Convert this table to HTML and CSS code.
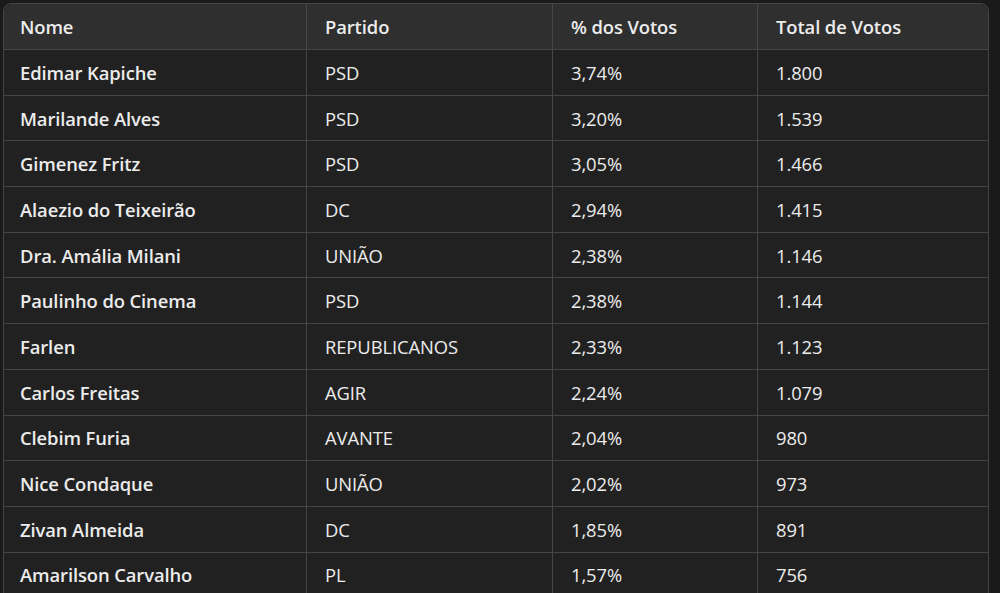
FILE: index.html
```html
<!DOCTYPE html>
<html lang="pt">
<head>
<meta charset="utf-8">
<link rel="stylesheet" href="styles.css">
</head>
<body>
<div class="wrap">
<table class="tbl">
<colgroup><col class="c1"><col class="c2"><col class="c3"><col class="c4"></colgroup>
<thead>
<tr><th>Nome</th><th>Partido</th><th>% dos Votos</th><th>Total de Votos</th></tr>
</thead>
<tbody>
<tr><td class="nm">Edimar Kapiche</td><td>PSD</td><td>3,74%</td><td>1.800</td></tr>
<tr><td class="nm">Marilande Alves</td><td>PSD</td><td>3,20%</td><td>1.539</td></tr>
<tr><td class="nm">Gimenez Fritz</td><td>PSD</td><td>3,05%</td><td>1.466</td></tr>
<tr><td class="nm">Alaezio do Teixeirão</td><td>DC</td><td>2,94%</td><td>1.415</td></tr>
<tr><td class="nm">Dra. Amália Milani</td><td>UNIÃO</td><td>2,38%</td><td>1.146</td></tr>
<tr><td class="nm">Paulinho do Cinema</td><td>PSD</td><td>2,38%</td><td>1.144</td></tr>
<tr><td class="nm">Farlen</td><td>REPUBLICANOS</td><td>2,33%</td><td>1.123</td></tr>
<tr><td class="nm">Carlos Freitas</td><td>AGIR</td><td>2,24%</td><td>1.079</td></tr>
<tr><td class="nm">Clebim Furia</td><td>AVANTE</td><td>2,04%</td><td>980</td></tr>
<tr><td class="nm">Nice Condaque</td><td>UNIÃO</td><td>2,02%</td><td>973</td></tr>
<tr><td class="nm">Zivan Almeida</td><td>DC</td><td>1,85%</td><td>891</td></tr>
<tr><td class="nm">Amarilson Carvalho</td><td>PL</td><td>1,57%</td><td>756</td></tr>
</tbody>
</table>
</div>
</body>
</html>
```
FILE: styles.css
```css
html, body {
  margin: 0;
  padding: 0;
  background: #1a1a1a;
  overflow: hidden;
}
.wrap {
  padding: 3px 0 0 3px;
  width: 986px;
}
.tbl {
  width: 986px;
  border-collapse: separate;
  border-spacing: 0;
  table-layout: fixed;
  font-family: "Open Sans", "Noto Sans", sans-serif;
  font-size: 18.4px;
  color: #ececec;
  background: #212121;
  border: 1px solid #454545;
  border-radius: 8px 8px 0 0;
  overflow: hidden;
}
.c1 { width: 303px; }
.c2 { width: 246px; }
.c3 { width: 205px; }
.c4 { width: auto; }
th, td {
  text-align: left;
  padding: 0 0 0 18px;
  border-right: 1px solid #454545;
  border-bottom: 1px solid #454545;
  white-space: nowrap;
  letter-spacing: -0.1px;
}
th:last-child, td:last-child { border-right: none; }
th {
  background: #2f2f2f;
  height: 45px;
  font-weight: 600;
}
td {
  height: 44.7px;
  font-weight: 400;
}
td.nm { font-weight: 600; padding-left: 16px; }
th:first-child { padding-left: 16px; }
```
